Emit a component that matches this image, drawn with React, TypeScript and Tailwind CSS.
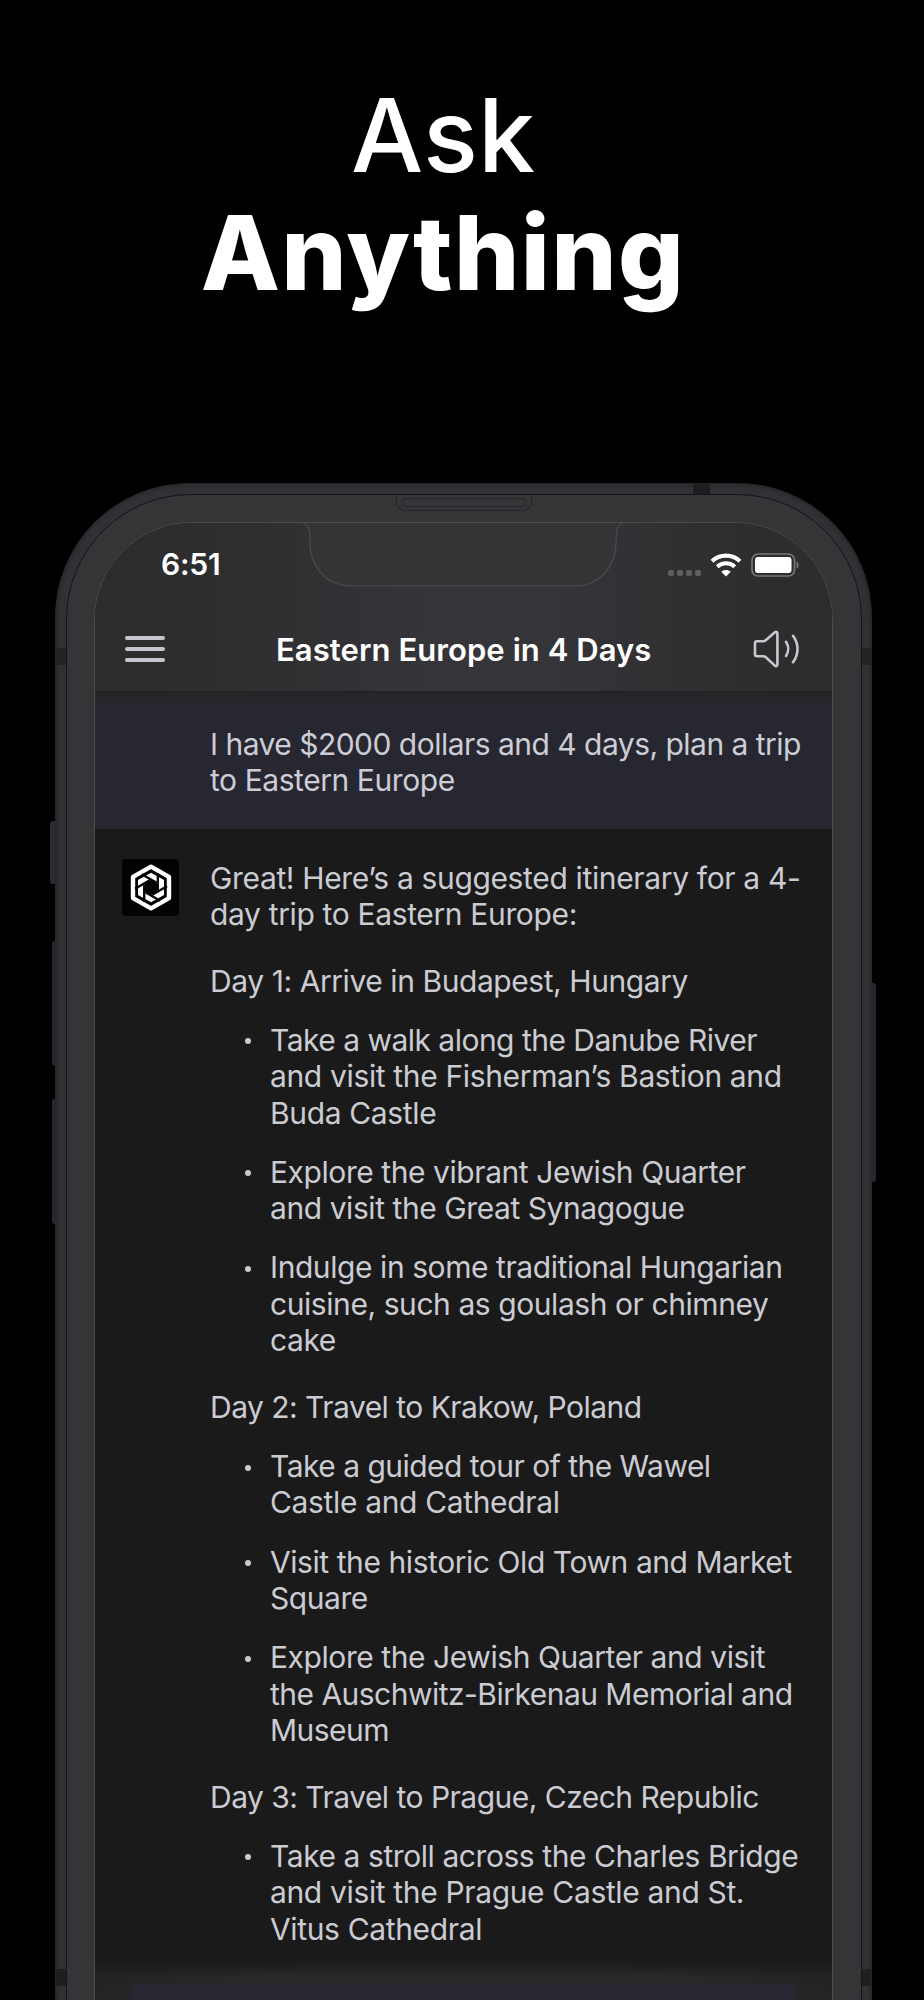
import React from "react";

type Line = { text: string; fit?: "snug" | "tight" };

const days: { title: Line; items: Line[][] }[] = [
  {
    title: { text: "Day 1: Arrive in Budapest, Hungary" },
    items: [
      [
        { text: "Take a walk along the Danube River", fit: "tight" },
        { text: "and visit the Fisherman’s Bastion and", fit: "snug" },
        { text: "Buda Castle", fit: "snug" },
      ],
      [{ text: "Explore the vibrant Jewish Quarter" }, { text: "and visit the Great Synagogue" }],
      [{ text: "Indulge in some traditional Hungarian" }, { text: "cuisine, such as goulash or chimney" }, { text: "cake" }],
    ],
  },
  {
    title: { text: "Day 2: Travel to Krakow, Poland", fit: "tight" },
    items: [
      [{ text: "Take a guided tour of the Wawel", fit: "tight" }, { text: "Castle and Cathedral", fit: "snug" }],
      [{ text: "Visit the historic Old Town and Market" }, { text: "Square" }],
      [
        { text: "Explore the Jewish Quarter and visit" },
        { text: "the Auschwitz-Birkenau Memorial and", fit: "tight" },
        { text: "Museum", fit: "tight" },
      ],
    ],
  },
  {
    title: { text: "Day 3: Travel to Prague, Czech Republic", fit: "tight" },
    items: [
      [
        { text: "Take a stroll across the Charles Bridge" },
        { text: "and visit the Prague Castle and St.", fit: "snug" },
        { text: "Vitus Cathedral", fit: "snug" },
      ],
    ],
  },
];

const tracking = {
  snug: "tracking-[-0.35px]",
  normal: "tracking-[-0.43px]",
  tight: "tracking-[-0.52px]",
};

function Lines({ lines }: { lines: Line[] }) {
  return (
    <p>
      {lines.map((line) => (
        <span key={line.text} className={`block whitespace-nowrap ${tracking[line.fit ?? "normal"]}`}>
          {line.text}
        </span>
      ))}
    </p>
  );
}

function Notch() {
  return (
    <svg className="absolute left-[203px] -top-[2px] h-[68px] w-[330px]" viewBox="298 521 330 68" fill="none">
      <path
        d="M298 521V522.5H300C307 522.5 309.5 527 309.8 536C310 546 310 553 314 562C321 577 334 586 352 586H574C592 586 605 577 612 562C616 553 616 546 616.2 536C616.5 527 619 522.5 626 522.5H628V521Z"
        fill="#333435"
      />
      <path
        d="M298 522.5H300C307 522.5 309.5 527 309.8 536C310 546 310 553 314 562C321 577 334 586 352 586H574C592 586 605 577 612 562C616 553 616 546 616.2 536C616.5 527 619 522.5 626 522.5H628"
        stroke="#4c4c4d"
        strokeWidth="1.2"
      />
    </svg>
  );
}

function WifiIcon() {
  return (
    <svg className="h-[24px] w-[32px]" viewBox="0 0 32 24" fill="none" stroke="#fff">
      <path d="M2 8.2C9.8 .7 22.2 .7 30 8.2" strokeWidth="4.2" />
      <path d="M7.2 13.8C12 9.2 20 9.2 24.8 13.8" strokeWidth="4" />
      <path d="M16 23.5L11.3 18.7C13.9 16.5 18.1 16.5 20.7 18.7Z" fill="#fff" stroke="none" />
    </svg>
  );
}

function BatteryIcon() {
  return (
    <svg className="h-[24px] w-[49px]" viewBox="0 0 49 24" fill="none">
      <rect x="1" y="1" width="42.5" height="22" rx="6" stroke="#77777a" strokeWidth="1.7" />
      <rect x="4" y="4" width="36.5" height="16" rx="3" fill="#fff" />
      <path d="M45.5 8.5C48.3 9.6 48.3 14.4 45.5 15.5Z" fill="#77777a" />
    </svg>
  );
}

function SpeakerIcon() {
  return (
    <svg
      className="h-[38px] w-[48px]"
      viewBox="0 0 48 38"
      fill="none"
      stroke="#c8c8d2"
      strokeWidth="2.6"
      strokeLinejoin="round"
      strokeLinecap="round"
    >
      <path d="M4 11.3H10.2C11.3 11.3 12 11 12.8 10.3L21.6 2.6C23 1.4 24.4 1.8 24.4 3.6V34.4C24.4 36.2 23 36.6 21.6 35.4L12.8 27.2C12 26.5 11.3 26.2 10.2 26.2H4C2.6 26.2 2 25.6 2 24.2V13.3C2 11.9 2.6 11.3 4 11.3Z" />
      <path d="M33 11.8C35.8 16 35.8 21.8 33 26" />
      <path d="M40 5.8C46 13.6 46 24.4 40 32.2" />
    </svg>
  );
}

function Avatar() {
  return (
    <div className="flex size-[57px] shrink-0 items-center justify-center rounded-[4px] bg-[#020304]">
      <svg className="h-[47px] w-[44px]" viewBox="0 0 44 47" fill="none">
        <path d="M22 2.7L40 12.9V34.1L22 44.3L4 34.1V12.9Z" stroke="#fff" strokeWidth="4.4" strokeLinejoin="round" />
        <path d="M22 8.7L35 16V31L22 38.3L9 31V16Z" fill="#fff" />
        <path d="M22 16L28.5 19.75V27.25L22 31L15.5 27.25V19.75Z" fill="#020304" />
        <g stroke="#020304" strokeWidth="2.3">
          {[0, 60, 120, 180, 240, 300].map((angle) => (
            <path key={angle} d="M28.8 26V9" transform={`rotate(${angle} 22 23.5)`} />
          ))}
        </g>
      </svg>
    </div>
  );
}

function Frame({ children }: { children: React.ReactNode }) {
  return (
    <div className="relative ml-[55px] h-[1700px] w-[817px] shrink-0">
      <div className="absolute -left-[5px] top-[338px] h-[63px] w-[7px] rounded-l-[3px] bg-[#2c2c30]" />
      <div className="absolute -left-[3px] top-[458px] h-[125px] w-[5px] rounded-l-[3px] bg-[#29292d]" />
      <div className="absolute -left-[3px] top-[616px] h-[125px] w-[5px] rounded-l-[3px] bg-[#29292d]" />
      <div className="absolute -right-[4px] top-[500px] h-[199px] w-[6px] rounded-r-[3px] bg-[#29292d]" />
      <div className="relative h-full overflow-hidden rounded-[134px] border border-[#252629] bg-[#313235] pl-[10px] pr-[9.5px] pt-[10px] shadow-[inset_0_0_4px_#202125]">
        <div className="absolute left-0 top-[164px] h-[17px] w-[11px] bg-[#222325]" />
        <div className="absolute right-0 top-[164px] h-[17px] w-[11px] bg-[#222325]" />
        <div className="absolute left-0 top-[1485px] h-[17px] w-[11px] bg-[#1e1f20]" />
        <div className="absolute right-0 top-[1485px] h-[17px] w-[11px] bg-[#1e1f20]" />
        <div className="absolute left-[637px] top-0 h-[11px] w-[17px] bg-[#1d1e20]" />
        <div className="relative h-full rounded-[125px] border-[1.5px] border-[#141519] bg-[#333536] pl-[27px] pr-[28px] pt-[27px]">
          <div className="absolute left-[329px] top-0 h-[16px] w-[136px] rounded-b-[9px] border-[1.5px] border-t-0 border-[#242528] px-[5px] pt-[3px]">
            <div className="h-[9px] rounded-full border border-[#252629]" />
          </div>
          {children}
        </div>
      </div>
    </div>
  );
}

export default function App() {
  return (
    <main className="flex h-[2000px] w-[924px] flex-col overflow-hidden bg-black font-['Inter',sans-serif]">
      <h1 className="flex h-[483px] shrink-0 flex-col items-center pr-[38px] pt-[76px] text-[102px] leading-[118px] text-white">
        <span className="font-medium">Ask</span>
        <span className="text-[103px] font-extrabold tracking-[1.3px]">Anything</span>
      </h1>
      <Frame>
        <div className="relative flex h-[1600px] flex-col overflow-hidden rounded-t-[98px] border border-[#4c4c4d] bg-[#1a1a1b]">
          <Notch />
          <header className="h-[168px] shrink-0 bg-[linear-gradient(90deg,#2d2d2d_10%,#313134_30%,#353439_46%,#353439_62%,#313134_75%,#2d2d2d_92%)]">
            <div className="flex h-[84px] items-center justify-between pl-[66px] pr-[32px]">
              <span className="pb-[2px] text-[30px] font-semibold leading-none tracking-[-0.2px] text-white">6:51</span>
              <div className="flex items-center">
                <div className="mr-[9px] mt-[15px] flex gap-[3px]">
                  <i className="size-[6px] rounded-[2px] bg-[#5f5f61]" />
                  <i className="size-[6px] rounded-[2px] bg-[#5f5f61]" />
                  <i className="size-[6px] rounded-[2px] bg-[#5f5f61]" />
                  <i className="size-[6px] rounded-[2px] bg-[#5f5f61]" />
                </div>
                <WifiIcon />
                <span className="w-[9px]" />
                <BatteryIcon />
              </div>
            </div>
            <div className="flex h-[84px] items-center justify-between pl-[30px] pr-[31px]">
              <button className="flex w-[40px] flex-col gap-[7px]" aria-label="Menu">
                <i className="h-[4px] rounded-full bg-[#c6c6d0]" />
                <i className="h-[4px] rounded-full bg-[#c6c6d0]" />
                <i className="h-[4px] rounded-full bg-[#c6c6d0]" />
              </button>
              <h2 className="whitespace-nowrap pl-[10px] text-[31px] font-semibold leading-none tracking-[0.06px] text-white">
                Eastern Europe in 4 Days
              </h2>
              <button aria-label="Read aloud">
                <SpeakerIcon />
              </button>
            </div>
          </header>
          <section className="h-[138px] shrink-0 bg-[linear-gradient(180deg,#232326_0px,#27272b_6px,#272731_15px)] pl-[115px] pt-[35px] text-[30px] leading-[36.33px] text-[#cdcdd6]">
            <Lines lines={[{ text: "I have $2000 dollars and 4 days, plan a trip", fit: "tight" }, { text: "to Eastern Europe" }]} />
          </section>
          <section className="flex pl-[27px] pt-[30px] text-[30px] leading-[36.33px] text-[#cbccd2]">
            <Avatar />
            <div className="ml-[31px] pt-[0.6px]">
              <Lines
                lines={[
                  { text: "Great! Here’s a suggested itinerary for a 4-", fit: "snug" },
                  { text: "day trip to Eastern Europe:", fit: "snug" },
                ]}
              />
              {days.map((day) => (
                <div key={day.title.text} className="mt-[30.5px]">
                  <h3>
                    <Lines lines={[day.title]} />
                  </h3>
                  <ul>
                    {day.items.map((item) => (
                      <li key={item[0].text} className="mt-[22.9px] flex">
                        <span className="flex h-[36px] w-[60px] shrink-0 items-center pl-[35px] pt-[3px]">
                          <i className="size-[6px] rounded-full bg-[#cbccd2]" />
                        </span>
                        <Lines lines={item} />
                      </li>
                    ))}
                  </ul>
                </div>
              ))}
            </div>
          </section>
          <footer className="absolute left-0 right-0 top-[1433px] bg-[radial-gradient(ellipse_60%_60px_at_50%_45px,#292929_60%,#202021_100%)] px-[35px] pt-[28px]">
            <div className="absolute inset-x-0 top-0 h-[20px] bg-[linear-gradient(180deg,#1a1a1b_20%,transparent)]" />
            <div className="relative h-[80px] rounded-[8px] bg-[#272731]" />
          </footer>
        </div>
      </Frame>
    </main>
  );
}
